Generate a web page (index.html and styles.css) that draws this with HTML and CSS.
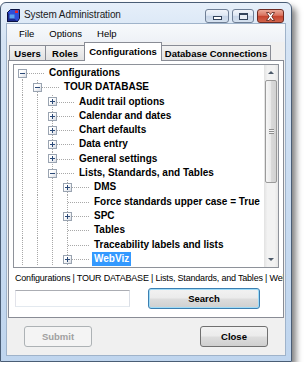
FILE: index.html
```html
<!DOCTYPE html>
<html lang="en">
<head>
  <meta charset="UTF-8" />
  <title>System Administration</title>
  <link rel="stylesheet" href="styles.css">
</head>
<body>
  <div class="window">
    <div class="titlebar">
      <svg class="app-icon" width="13" height="13" viewBox="0 0 13 13">
        <rect x="0.5" y="3.5" width="10" height="9" fill="#1b2a8f" stroke="#0b1240"/>
        <path d="M0.5 3.5l3-3h9v9l-2 3" fill="#2f4fd8" stroke="#0b1240"/>
        <rect x="2.5" y="5.5" width="5" height="4" fill="#5aa2f0"/>
        <rect x="8" y="1.5" width="3" height="2.5" fill="#e3232c"/>
      </svg>
      <span class="title">System Administration</span>
      <div class="caption-buttons">
        <span class="cap-btn cap-min"><i></i></span>
        <span class="cap-btn cap-max"><i></i></span>
        <span class="cap-btn cap-close">
          <svg width="11" height="9" viewBox="0 0 11 9">
            <path d="M1.5 0.5h2.5l1.5 2 1.5-2h2.5l-2.7 4 2.7 4h-2.5l-1.5-2-1.5 2h-2.5l2.7-4z" fill="#fff" stroke="#5a2018" stroke-width="0.8"/>
          </svg>
        </span>
      </div>
    </div>

    <div class="client">
      <div class="menubar">
        <span>File</span>
        <span>Options</span>
        <span>Help</span>
      </div>

      <div class="tabs">
        <span class="tab tab-users">Users</span>
        <span class="tab tab-roles">Roles</span>
        <span class="tab tab-config active">Configurations</span>
        <span class="tab tab-db">Database Connections</span>
      </div>

      <div class="tab-page">
        <div class="tree">
          <div class="tree-body">
            <div class="row"><span class="c first"><span class="exp minus"></span></span><span class="lbl">Configurations</span></div>
            <div class="row"><span class="g"></span><span class="c"><span class="exp minus"></span></span><span class="lbl">TOUR DATABASE</span></div>
            <div class="row"><span class="g"></span><span class="g"></span><span class="c"><span class="exp plus"></span></span><span class="lbl">Audit trail options</span></div>
            <div class="row"><span class="g"></span><span class="g"></span><span class="c"><span class="exp plus"></span></span><span class="lbl">Calendar and dates</span></div>
            <div class="row"><span class="g"></span><span class="g"></span><span class="c"><span class="exp plus"></span></span><span class="lbl">Chart defaults</span></div>
            <div class="row"><span class="g"></span><span class="g"></span><span class="c"><span class="exp plus"></span></span><span class="lbl">Data entry</span></div>
            <div class="row"><span class="g"></span><span class="g"></span><span class="c"><span class="exp plus"></span></span><span class="lbl">General settings</span></div>
            <div class="row"><span class="g"></span><span class="g"></span><span class="c"><span class="exp minus"></span></span><span class="lbl">Lists, Standards, and Tables</span></div>
            <div class="row"><span class="g"></span><span class="g"></span><span class="g"></span><span class="c"><span class="exp plus"></span></span><span class="lbl">DMS</span></div>
            <div class="row"><span class="g"></span><span class="g"></span><span class="g"></span><span class="c"></span><span class="lbl">Force standards upper case = True</span></div>
            <div class="row"><span class="g"></span><span class="g"></span><span class="g"></span><span class="c"><span class="exp plus"></span></span><span class="lbl">SPC</span></div>
            <div class="row"><span class="g"></span><span class="g"></span><span class="g"></span><span class="c"></span><span class="lbl">Tables</span></div>
            <div class="row"><span class="g"></span><span class="g"></span><span class="g"></span><span class="c"></span><span class="lbl">Traceability labels and lists</span></div>
            <div class="row"><span class="g"></span><span class="g"></span><span class="g"></span><span class="c"><span class="exp plus"></span></span><span class="lbl sel">WebViz</span></div>
          </div>
          <div class="vscroll">
            <span class="sb-btn"><i class="arrow-up"></i></span>
            <span class="sb-thumb"><i></i></span>
            <span class="sb-track"></span>
            <span class="sb-btn"><i class="arrow-down"></i></span>
          </div>
        </div>

        <p class="path">Configurations | TOUR DATABASE | Lists, Standards, and Tables | WebViz</p>

        <div class="search-row">
          <input class="search-box" type="text" />
          <button class="btn btn-search" type="button">Search</button>
        </div>
      </div>

      <div class="footer">
        <button class="btn" type="button" disabled>Submit</button>
        <button class="btn" type="button">Close</button>
      </div>
    </div>
  </div>
</body>
</html>
```

FILE: styles.css
```css
body {
  margin: 0;
  background: #fff;
  font-family: 'Liberation Sans', Arial, sans-serif;
  color: #000;
}
.window {
  box-sizing: border-box;
  width: 292px;
  height: 360px;
  margin-top: 2px;
  padding: 0 5px 5px;
  border: 1px solid #4a5d75;
  border-radius: 6px 6px 0 0;
  background: linear-gradient(to bottom, #e6eff9 0, #d4e3f4 40px, #bfd5ee 100%);
  box-shadow: 4px 5px 6px rgba(0, 0, 0, 0.5);
  display: flex;
  flex-direction: column;
}

/* title bar */
.titlebar {
  height: 20px;
  display: flex;
  align-items: center;
  flex: none;
}
.app-icon {
  margin: 4px 0 0 1px;
  flex: none;
}
.title {
  margin: 2px 0 0 4px;
  font-size: 10px;
  letter-spacing: -0.1px;
  color: #1b1b1b;
}
.caption-buttons {
  margin: 6px 2px 0 auto;
  align-self: flex-start;
  display: flex;
  gap: 3px;
}
.cap-btn {
  box-sizing: border-box;
  height: 14px;
  border: 1px solid #6f7f96;
  border-radius: 3px;
  background: linear-gradient(to bottom, #f1f5fb 0, #dfe8f4 45%, #c7d5e8 50%, #d5e1ef 100%);
  display: flex;
  align-items: center;
  justify-content: center;
}
.cap-min { width: 24px; }
.cap-max { width: 22px; }
.cap-close {
  width: 27px;
  border-color: #6d2a22;
  background: linear-gradient(to bottom, #eba998 0, #d9735f 45%, #c5432d 50%, #d2644c 100%);
}
.cap-min i {
  width: 7px;
  height: 2px;
  margin-top: 4px;
  background: #fff;
  border: 1px solid #33445c;
}
.cap-max i {
  width: 7px;
  height: 4px;
  background: #e8eef6;
  border: 1px solid #33445c;
  border-top-width: 2px;
}

/* client area */
.client {
  flex: 1;
  background: #f0f0f0;
  border: 1px solid #9fb3ca;
  display: flex;
  flex-direction: column;
}
.menubar {
  height: 18px;
  flex: none;
  display: flex;
  align-items: center;
  gap: 15px;
  padding-left: 12px;
  font-size: 9.5px;
  background: linear-gradient(to bottom, #f7f9fc, #eef1f6);
}

/* tabs */
.tabs {
  height: 18px;
  flex: none;
  display: flex;
  align-items: flex-end;
  padding-left: 2px;
}
.tab {
  box-sizing: border-box;
  height: 15px;
  margin-right: -1px;
  border: 1px solid #898c95;
  border-bottom: none;
  background: linear-gradient(to bottom, #f3f3f3, #e2e2e2);
  font-size: 9.5px;
  font-weight: bold;
  display: flex;
  align-items: center;
  justify-content: center;
}
.tab-users { width: 37px; }
.tab-roles { width: 40px; }
.tab-config { width: 78px; }
.tab-db { width: 110px; }
.tab.active {
  height: 19px;
  margin-bottom: -1px;
  padding-bottom: 2px;
  background: #fff;
  position: relative;
  z-index: 1;
}

.tab-page {
  box-sizing: border-box;
  height: 258px;
  flex: none;
  margin: 0 1px;
  padding: 3px 3px 0 4px;
  border: 1px solid #898c95;
  background: #fff;
  overflow: hidden;
}

/* tree */
.tree {
  box-sizing: border-box;
  width: 266px;
  height: 204px;
  border: 1px solid #8e929a;
  display: flex;
}
.tree-body {
  flex: 1;
  overflow: hidden;
  padding-top: 1px;
}
.row {
  height: 14.3px;
  display: flex;
  align-items: stretch;
}
.g,
.c {
  flex: none;
  background-image: repeating-linear-gradient(to bottom, #a8a8a8 0 1px, transparent 1px 2px);
  background-repeat: no-repeat;
  background-size: 1px 100%;
  background-position: 8px 0;
}
.g { width: 15px; }
.c {
  width: 33px;
  display: flex;
  align-items: center;
  background-image:
    repeating-linear-gradient(to bottom, #a8a8a8 0 1px, transparent 1px 2px),
    repeating-linear-gradient(to right, #a8a8a8 0 1px, transparent 1px 2px);
  background-size: 1px 100%, 22px 1px;
  background-position: 8px 0, 9px 7px;
}
.c.first {
  background-size: 1px 50%, 22px 1px;
  background-position: 8px 100%, 9px 7px;
}
.exp {
  box-sizing: border-box;
  width: 9px;
  height: 9px;
  margin-left: 4px;
  border: 1px solid #9aa4b1;
  background: linear-gradient(135deg, #fff 35%, #d8dce4);
  position: relative;
}
.exp::before {
  content: '';
  position: absolute;
  left: 1px;
  right: 1px;
  top: 3px;
  height: 1px;
  background: #2b4a78;
}
.exp.plus::after {
  content: '';
  position: absolute;
  top: 1px;
  bottom: 1px;
  left: 3px;
  width: 1px;
  background: #2b4a78;
}
.lbl {
  height: 14px;
  line-height: 14px;
  padding: 0 2px;
  font-size: 10px;
  font-weight: bold;
  white-space: nowrap;
}
.lbl.sel {
  background: #3399ff;
  color: #fff;
}

/* scrollbar */
.vscroll {
  width: 14px;
  flex: none;
  display: flex;
  flex-direction: column;
  background: linear-gradient(to right, #e2e2e2, #f2f2f2 25%, #f2f2f2 75%, #e6e6e6);
}
.sb-btn {
  height: 15px;
  flex: none;
  display: flex;
  align-items: center;
  justify-content: center;
}
.arrow-up,
.arrow-down {
  width: 0;
  height: 0;
  border-left: 3px solid transparent;
  border-right: 3px solid transparent;
}
.arrow-up { border-bottom: 3px solid #4d5a6a; }
.arrow-down { border-top: 3px solid #4d5a6a; }
.sb-thumb {
  box-sizing: border-box;
  height: 103px;
  flex: none;
  margin: 0 1px;
  border: 1px solid #9a9a9a;
  border-radius: 2px;
  background: linear-gradient(to right, #f6f6f6, #e9e9e9 50%, #d9d9d9 55%, #d2d2d2);
  display: flex;
  align-items: center;
  justify-content: center;
}
.sb-thumb i {
  width: 5px;
  height: 5px;
  background: repeating-linear-gradient(to bottom, #8d8d8d 0 1px, #f4f4f4 1px 2px);
}
.sb-track { flex: 1; }

/* status path and search */
.path {
  margin: 0;
  height: 18px;
  line-height: 20px;
  padding-left: 2px;
  font-size: 9px;
  letter-spacing: -0.2px;
  white-space: nowrap;
}
.search-row {
  margin-top: 2px;
  height: 20px;
  display: flex;
  align-items: center;
}
.search-box {
  box-sizing: border-box;
  width: 115px;
  height: 17px;
  margin: 0 0 0 2px;
  padding: 0;
  border: 1px solid #abadb3;
  border-color: #abadb3 #dbdfe6 #e3e9ef #e2e3ea;
  background: #fff;
}
.btn {
  box-sizing: border-box;
  width: 68px;
  height: 21px;
  padding: 0;
  border: 1px solid #707070;
  border-radius: 3px;
  background: linear-gradient(to bottom, #f2f2f2 0, #ebebeb 48%, #dddddd 52%, #cfcfcf 100%);
  font-family: 'Liberation Sans', Arial, sans-serif;
  font-size: 9.5px;
  font-weight: bold;
  color: #000;
}
.btn-search {
  width: 112px;
  height: 21px;
  margin-left: 18px;
  border-color: #3c7fb1;
  box-shadow: inset 0 0 0 1px #9fdcf8;
}
.btn:disabled {
  border-color: #adb2b5;
  background: #f4f4f4;
  color: #a0a0a0;
}

/* footer */
.footer {
  flex: 1;
  display: flex;
  align-items: center;
  justify-content: space-between;
  padding: 0 17px;
}
```
